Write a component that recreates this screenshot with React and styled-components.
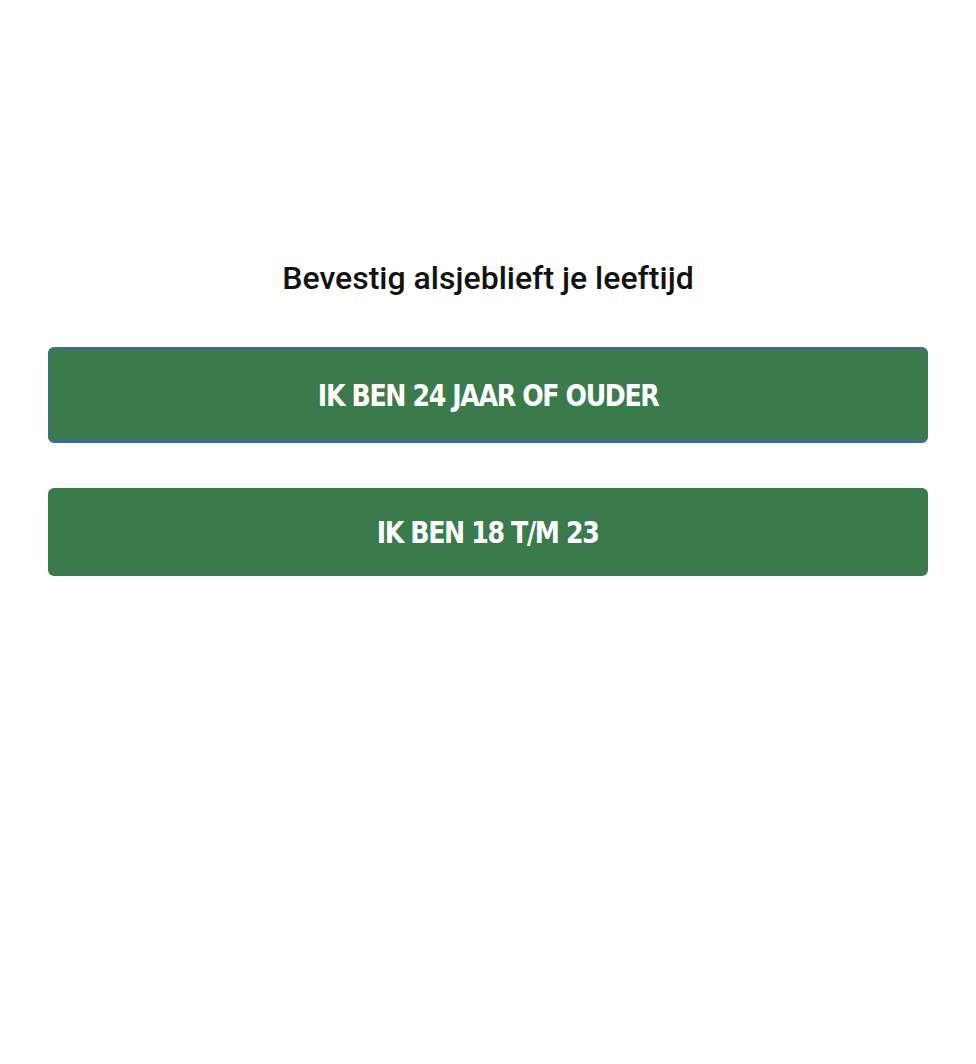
import React from "react";
import styled, { createGlobalStyle } from "styled-components";

const Global = createGlobalStyle`
  html, body { margin: 0; padding: 0; background: #fff; }
  body { font-family: Roboto, "Noto Sans", sans-serif; }
`;

const Page = styled.main`
  display: flex;
  flex-direction: column;
  padding: 258px 48px 0;
  min-height: 1064px;
  box-sizing: border-box;
`;

const Title = styled.h1`
  margin: 0 0 49px;
  text-align: center;
  font-family: Roboto, "Noto Sans", sans-serif;
  font-weight: 500;
  font-size: 32px;
  line-height: 40px;
  color: #121212;
`;

const Buttons = styled.div`
  display: flex;
  flex-direction: column;
  gap: 45px;
`;

const AgeButton = styled.button`
  display: flex;
  align-items: center;
  justify-content: center;
  width: 100%;
  height: ${(p) => (p.$focused ? "96px" : "88px")};
  box-sizing: border-box;
  background: #3b7a4b;
  color: #fff;
  border: none;
  border-radius: 6px;
  ${(p) =>
    p.$focused &&
    `
    border-top: 3px solid #3e6c8e;
    border-bottom: 3px solid #3e6c8e;
    border-left: 1px solid #3e6c8e;
    border-right: 1px solid #3e6c8e;
  `}
  cursor: pointer;
  padding: 0;
`;

const Label = styled.span`
  display: inline-block;
  font-family: "DejaVu Sans Condensed", "Liberation Sans", sans-serif;
  font-weight: 700;
  font-size: 31px;
  letter-spacing: -1.5px;
  text-transform: uppercase;
  transform: scaleX(0.905);
  white-space: nowrap;
`;

export default function App() {
  return (
    <>
      <Global />
      <Page>
        <Title>Bevestig alsjeblieft je leeftijd</Title>
        <Buttons>
          <AgeButton $focused>
            <Label>IK BEN 24 JAAR OF OUDER</Label>
          </AgeButton>
          <AgeButton>
            <Label>IK BEN 18 T/M 23</Label>
          </AgeButton>
        </Buttons>
      </Page>
    </>
  );
}
